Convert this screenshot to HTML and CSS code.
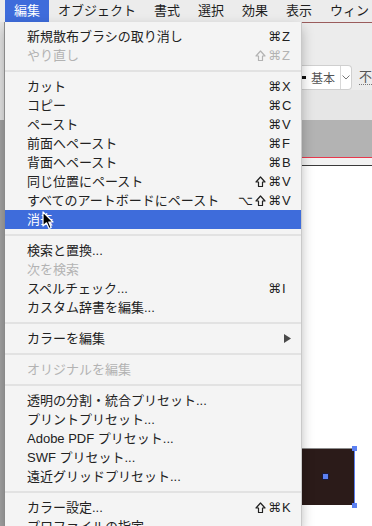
FILE: index.html
```html
<!DOCTYPE html>
<html lang="ja">
<head>
  <meta charset="UTF-8" />
  <meta name="viewport" content="width=device-width, initial-scale=1.0" />
  <title>編集メニュー</title>
  <link rel="stylesheet" href="styles.css">
</head>
<body>
  <div class="screen">
    <div class="menubar">
      <span class="mb-item active">編集</span>
      <span class="mb-item">オブジェクト</span>
      <span class="mb-item">書式</span>
      <span class="mb-item">選択</span>
      <span class="mb-item">効果</span>
      <span class="mb-item">表示</span>
      <span class="mb-item">ウィンドウ</span>
    </div>

    <div class="workspace">
      <div class="edge">
        <div class="edge-top"></div>
        <div class="edge-bottom"></div>
      </div>

      <!-- Edit menu -->
      <div class="menu">
        <div class="item"><span class="label">新規散布ブラシの取り消し</span><span class="key"><span class="mods">⌘</span><span class="k">Z</span></span></div>
        <div class="item disabled"><span class="label">やり直し</span><span class="key"><span class="mods"><svg class="shift" width="11" height="12" viewBox="0 0 11 12"><path d="M5.5 1 L10 6 L7.5 6 L7.5 10.5 L3.5 10.5 L3.5 6 L1 6 Z" fill="none" stroke="currentColor" stroke-width="1.2" stroke-linejoin="round"/></svg>⌘</span><span class="k">Z</span></span></div>
        <div class="sep"></div>
        <div class="item"><span class="label">カット</span><span class="key"><span class="mods">⌘</span><span class="k">X</span></span></div>
        <div class="item"><span class="label">コピー</span><span class="key"><span class="mods">⌘</span><span class="k">C</span></span></div>
        <div class="item"><span class="label">ペースト</span><span class="key"><span class="mods">⌘</span><span class="k">V</span></span></div>
        <div class="item"><span class="label">前面へペースト</span><span class="key"><span class="mods">⌘</span><span class="k">F</span></span></div>
        <div class="item"><span class="label">背面へペースト</span><span class="key"><span class="mods">⌘</span><span class="k">B</span></span></div>
        <div class="item"><span class="label">同じ位置にペースト</span><span class="key"><span class="mods"><svg class="shift" width="11" height="12" viewBox="0 0 11 12"><path d="M5.5 1 L10 6 L7.5 6 L7.5 10.5 L3.5 10.5 L3.5 6 L1 6 Z" fill="none" stroke="currentColor" stroke-width="1.2" stroke-linejoin="round"/></svg>⌘</span><span class="k">V</span></span></div>
        <div class="item"><span class="label">すべてのアートボードにペースト</span><span class="key"><span class="mods">⌥<svg class="shift" width="11" height="12" viewBox="0 0 11 12"><path d="M5.5 1 L10 6 L7.5 6 L7.5 10.5 L3.5 10.5 L3.5 6 L1 6 Z" fill="none" stroke="currentColor" stroke-width="1.2" stroke-linejoin="round"/></svg>⌘</span><span class="k">V</span></span></div>
        <div class="item selected"><span class="label">消去</span></div>
        <div class="sep"></div>
        <div class="item"><span class="label">検索と置換...</span></div>
        <div class="item disabled"><span class="label">次を検索</span></div>
        <div class="item"><span class="label">スペルチェック...</span><span class="key"><span class="mods">⌘</span><span class="k">I</span></span></div>
        <div class="item"><span class="label">カスタム辞書を編集...</span></div>
        <div class="sep"></div>
        <div class="item"><span class="label">カラーを編集</span><span class="key"><span class="k"><svg class="arrow" width="7" height="9" viewBox="0 0 7 9"><path d="M0 0 L7 4.5 L0 9 Z" fill="#4a4a4a"/></svg></span></span></div>
        <div class="sep"></div>
        <div class="item disabled"><span class="label">オリジナルを編集</span></div>
        <div class="sep"></div>
        <div class="item"><span class="label">透明の分割・統合プリセット...</span></div>
        <div class="item"><span class="label">プリントプリセット...</span></div>
        <div class="item"><span class="label">Adobe PDF プリセット...</span></div>
        <div class="item"><span class="label">SWF プリセット...</span></div>
        <div class="item"><span class="label">遠近グリッドプリセット...</span></div>
        <div class="sep"></div>
        <div class="item"><span class="label">カラー設定...</span><span class="key"><span class="mods"><svg class="shift" width="11" height="12" viewBox="0 0 11 12"><path d="M5.5 1 L10 6 L7.5 6 L7.5 10.5 L3.5 10.5 L3.5 6 L1 6 Z" fill="none" stroke="currentColor" stroke-width="1.2" stroke-linejoin="round"/></svg>⌘</span><span class="k">K</span></span></div>
        <div class="item"><span class="label">プロファイルの指定...</span></div>
      </div>

      <!-- Illustrator window behind the menu -->
      <div class="app">
        <div class="app-toolbar"></div>
        <div class="app-control">
          <div class="preset">
            <span class="stroke"></span>
            <span class="preset-name">基本</span>
            <span class="chev">
              <svg width="8" height="5" viewBox="0 0 8 5"><path d="M0.5 0.5 L4 4 L7.5 0.5" fill="none" stroke="#777" stroke-width="1"/></svg>
            </span>
          </div>
          <span class="opacity">不</span>
        </div>
        <div class="app-band"></div>
        <div class="app-tabs"></div>
        <div class="app-rule"></div>
        <div class="canvas">
          <div class="shape">
            <span class="handle handle-top"></span>
            <span class="handle handle-bottom"></span>
            <span class="center-point"></span>
          </div>
        </div>
      </div>
    </div>

    <svg class="cursor" width="13" height="19" viewBox="0 0 13 19">
      <path d="M1 1 L1 15 L4.5 11.8 L7 17.5 L9.2 16.5 L6.8 11 L11 11 Z" fill="#000" stroke="#fff" stroke-width="1.2" stroke-linejoin="round"/>
    </svg>
  </div>
</body>
</html>
```

FILE: styles.css
```css
body {
  margin: 0;
  font-family: "Liberation Sans", "Noto Sans CJK JP", sans-serif;
  font-size: 13px;
  color: #222;
  background-color: #fff;
  overflow: hidden;
}
.screen {
  position: relative;
  width: 372px;
  height: 526px;
  overflow: hidden;
}

/* menu bar */
.menubar {
  display: flex;
  height: 22px;
  padding-left: 5px;
  background-color: #ececec;
  white-space: nowrap;
}
.mb-item {
  padding: 0 9px;
  line-height: 22px;
  color: #1e1e1e;
}
.mb-item.active {
  background-color: #3e6cdb;
  color: #fff;
}

.workspace {
  display: flex;
  height: 504px;
}

/* strip of app visible left of the menu */
.edge {
  width: 5px;
  display: flex;
  flex-direction: column;
}
.edge-top {
  height: 98px;
  background-color: #e4e4e4;
}
.edge-bottom {
  flex: 1;
  background-color: #a3a3a3;
}

/* dropdown */
.menu {
  position: relative;
  z-index: 2;
  width: 296px;
  flex-shrink: 0;
  padding-top: 5px;
  background-color: #f4f4f4;
  box-shadow: 1px 0 0 #c9c9c9, -1px 0 0 #8a8a8a, 0 6px 12px rgba(0,0,0,0.3);
}
.item {
  display: flex;
  justify-content: space-between;
  height: 19px;
  line-height: 19px;
  padding: 0 9px 0 22px;
  white-space: nowrap;
}
.item.disabled {
  color: #b3b3b3;
}
.item.selected {
  background-color: #3e6cdb;
  color: #fff;
}
.key {
  display: flex;
  font-family: "Liberation Sans", "DejaVu Sans", sans-serif;
}
.mods {
  display: flex;
  align-items: center;
  gap: 2px;
  font-family: "DejaVu Sans", sans-serif;
  font-size: 13px;
}
.shift {
  display: block;
}
.k {
  display: flex;
  align-items: center;
  width: 10px;
  margin-left: 1px;
}
.arrow {
  margin-left: 2px;
}
.sep {
  height: 12px;
  display: flex;
  align-items: center;
}
.sep::before {
  content: "";
  display: block;
  width: 100%;
  height: 2px;
  background-color: #e2e2e2;
}

/* app window */
.app {
  flex: 1;
  display: flex;
  flex-direction: column;
  border-top: 1px solid #9a5c5c;
  overflow: hidden;
}
.app-toolbar {
  height: 42px;
  background-color: #ececec;
}
.app-control {
  display: flex;
  align-items: center;
  height: 25px;
  background-color: #ececec;
}
.preset {
  display: flex;
  align-items: center;
  width: 55px;
  height: 23px;
  background-color: #fff;
  border: 1px solid #cfcfcf;
  border-left: none;
  border-radius: 0 4px 4px 0;
}
.stroke {
  width: 4px;
  height: 3px;
  margin-left: 1px;
  background-color: #111;
}
.preset-name {
  margin-left: 5px;
  font-size: 12px;
  color: #555;
}
.chev {
  display: flex;
  align-items: center;
  justify-content: center;
  flex: 1;
  height: 100%;
  margin-left: 5px;
  border-left: 1px solid #d8d8d8;
}
.opacity {
  margin-left: 7px;
  font-size: 13px;
  color: #555;
  border-bottom: 1px dotted #777;
  line-height: 14px;
}
.app-band {
  height: 30px;
  background-color: #e6e6e6;
}
.app-tabs {
  height: 37px;
  background-color: #b3b3b3;
  border-bottom: 1px solid #e8384d;
}
.app-rule {
  height: 7px;
  background-color: #f2f2f2;
  border-bottom: 1px solid #3a3a3a;
}
.canvas {
  flex: 1;
  background-color: #fff;
  padding-top: 282px;
}

/* selected artwork */
.shape {
  position: relative;
  width: 53px;
  height: 56px;
  background-color: #2b1b19;
  border-top: 1px solid #8c8c8c;
  border-right: 1px solid #5a7ef0;
}
.handle {
  position: absolute;
  right: -3px;
  width: 5px;
  height: 5px;
  background-color: #5b80f2;
}
.handle-top {
  top: -3px;
}
.handle-bottom {
  bottom: -3px;
}
.center-point {
  position: absolute;
  left: 22px;
  top: 25px;
  width: 5px;
  height: 5px;
  background-color: #5b80f2;
  outline: 1px solid #1a1a3a;
}

.cursor {
  position: absolute;
  left: 42px;
  top: 211px;
  z-index: 5;
}
```
